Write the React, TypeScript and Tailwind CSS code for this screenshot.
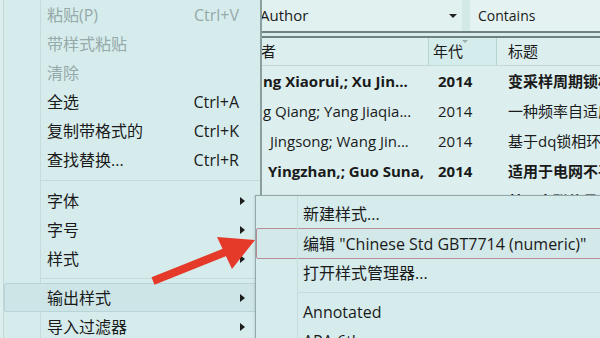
import React from 'react';

const FONT = { fontFamily: '"Open Sans", "Noto Sans CJK SC", sans-serif' };

type MenuItem =
  | { kind: 'item'; label: string; shortcut?: string; sub?: boolean; disabled?: boolean; active?: boolean }
  | { kind: 'sep' };

const MAIN_MENU: MenuItem[] = [
  { kind: 'item', label: '粘贴(P)', shortcut: 'Ctrl+V', disabled: true },
  { kind: 'item', label: '带样式粘贴', disabled: true },
  { kind: 'item', label: '清除', disabled: true },
  { kind: 'item', label: '全选', shortcut: 'Ctrl+A' },
  { kind: 'item', label: '复制带格式的', shortcut: 'Ctrl+K' },
  { kind: 'item', label: '查找替换...', shortcut: 'Ctrl+R' },
  { kind: 'sep' },
  { kind: 'item', label: '字体', sub: true },
  { kind: 'item', label: '字号', sub: true },
  { kind: 'item', label: '样式', sub: true },
  { kind: 'sep' },
  { kind: 'item', label: '输出样式', sub: true, active: true },
  { kind: 'item', label: '导入过滤器', sub: true },
];

const ROWS = [
  { author: 'ng Xiaorui,; Xu Jin...', year: '2014', title: '变采样周期锁相环', bold: true, indent: 'pl-[1px]' },
  { author: 'g Qiang; Yang Jiaqia...', year: '2014', title: '一种频率自适应', bold: false, indent: 'pl-[1px]' },
  { author: 'Jingsong; Wang Jin...', year: '2014', title: '基于dq锁相环的', bold: false, indent: 'pl-[8px]' },
  { author: 'Yingzhan,; Guo Suna,', year: '2014', title: '适用于电网不平衡', bold: true, indent: 'pl-[6px]' },
  { author: 'Hong; Yang Dongs...', year: '2014', title: '基于串联信号', bold: true, indent: 'pl-[6px]' },
];

function SubArrow({ active }: { active?: boolean }) {
  return (
    <span
      className={`ml-auto h-0 w-0 border-y-[4px] border-l-[5px] border-y-transparent border-l-[#1c1c1c] ${
        active ? 'mr-[10px]' : 'mr-[15px]'
      }`}
    />
  );
}

export default function App() {
  return (
    <div className="relative h-[338px] w-[600px] overflow-hidden bg-[#dcefee] text-[15px] text-[#1a1a1a]" style={FONT}>
      {/* Library window behind the menu */}
      <div className="flex h-full flex-col pl-[262px]">
        <div className="flex h-[31px] items-stretch">
          <div className="flex w-[200px] items-center bg-[#e1f1f0] pr-[5px]">
            <span className="-ml-[2px] flex-1">Author</span>
            <span className="h-0 w-0 border-x-[4px] border-t-[4px] border-x-transparent border-t-[#222]" />
          </div>
          <div className="w-[8px] bg-[#d3e9e8]" />
          <div className="flex flex-1 items-center bg-[#e4f3f2] pl-[8px] text-[14px]">Contains</div>
        </div>
        <div className="h-[7px] border-y-2 border-[#6f8282] bg-[#d8ecec]" />
        <div className="flex h-[28px] items-center border-b border-[#c3d9d9] bg-[#dcefee]">
          <div className="-ml-[16px] w-[166px]">作者</div>
          <div className="relative ml-[16px] flex h-full w-[69px] items-center border-x border-[#b7d3d4] bg-[#d5ecec] pl-[4px]">
            年代
            <span className="absolute left-[33px] top-[2px] h-0 w-0 border-x-[3px] border-t-[3px] border-x-transparent border-t-[#9aa]" />
          </div>
          <div className="flex-1 pl-[11px]">标题</div>
        </div>
        {ROWS.map((r) => (
          <div key={r.author} className={`flex h-[30px] items-center whitespace-nowrap ${r.bold ? 'font-bold' : ''}`}>
            <div className={`w-[166px] overflow-hidden ${r.indent}`}>{r.author}</div>
            <div className="w-[69px] pl-[10px]">{r.year}</div>
            <div className="flex-1 overflow-hidden pl-[11px]">{r.title}</div>
          </div>
        ))}
      </div>

      {/* Context menu */}
      <div className="absolute left-[3px] top-0 flex h-[345px] w-[259px] flex-col border-l border-r-2 border-l-[#c2d8d8] border-r-[#8aa0a0] bg-[#d6ecec] text-[16px]">
        <div className="pointer-events-none absolute bottom-0 left-[36px] top-0 w-px bg-[#c6dcdc]" />
        {MAIN_MENU.map((m, i) =>
          m.kind === 'sep' ? (
            <div key={i} className={`flex items-center pl-[37px] ${i === 6 ? 'h-[12px]' : 'h-[10px]'}`}>
              <div className="h-px flex-1 bg-[#c4dbdb]" />
            </div>
          ) : (
            <div
              key={i}
              className={`relative flex h-[29px] items-center ${
                m.active ? 'mr-[4px] rounded-[2px] border border-[#b8d4d6] bg-[#cde5e6] pl-[42px]' : 'pl-[43px]'
              } ${m.disabled ? 'text-[#95a9a9]' : ''}`}
            >
              <span>{m.label}</span>
              {m.shortcut && <span className="ml-auto mr-[21px]">{m.shortcut}</span>}
              {m.sub && <SubArrow active={m.active} />}
            </div>
          )
        )}
      </div>

      {/* Submenu */}
      <div className="absolute left-[255px] top-[195px] flex h-[160px] w-[360px] flex-col border-l border-t border-[#93a9a9] bg-[#d6ecec] pt-[4px] text-[16px] shadow-[-1px_0_2px_rgba(0,0,0,0.1)]">
        <div className="pointer-events-none absolute bottom-0 left-[41px] top-0 w-px bg-[#c6dcdc]" />
        <div className="flex h-[29px] items-center pl-[47px]">新建样式...</div>
        <div className="flex h-[31px] items-center whitespace-nowrap rounded-[2px] border border-[#b58c98] bg-[#d3e8e8] pl-[46px]">
          编辑 "Chinese Std GBT7714 (numeric)"
        </div>
        <div className="flex h-[28px] items-center pl-[47px]">打开样式管理器...</div>
        <div className="flex h-[12px] items-center pl-[42px]">
          <div className="h-px flex-1 bg-[#c4dbdb]" />
        </div>
        <div className="flex h-[29px] items-center pl-[47px]">Annotated</div>
        <div className="flex h-[29px] items-center pl-[47px]">APA 6th</div>
      </div>

      {/* Red annotation arrow */}
      <svg className="pointer-events-none absolute left-0 top-0" width="600" height="338" viewBox="0 0 600 338">
        <line x1="153" y1="281" x2="228" y2="251" stroke="#e5392a" strokeWidth="8" />
        <polygon points="217,237 255,240 232,269" fill="#e5392a" />
      </svg>
    </div>
  );
}
